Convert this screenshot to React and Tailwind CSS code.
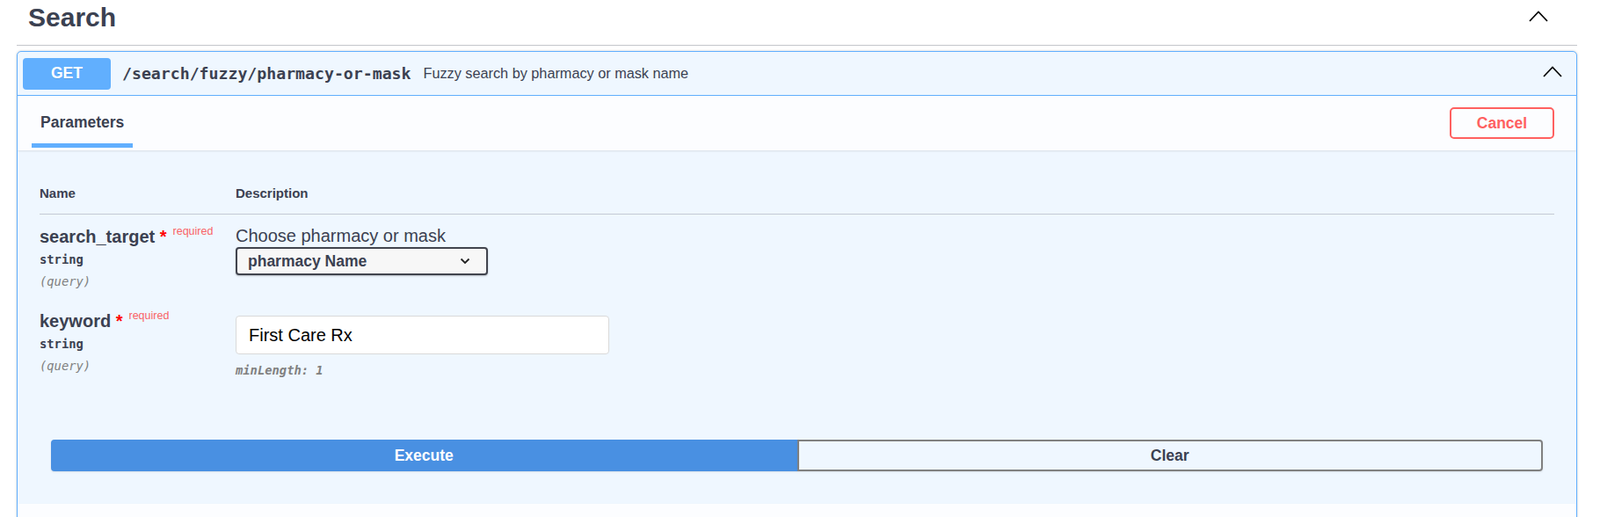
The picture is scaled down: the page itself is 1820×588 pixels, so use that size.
import React from "react";

const Chevron = ({ className }) => (
  <svg width="22" height="13" viewBox="0 0 22 13" className={className}>
    <polyline points="1,12 11,1.5 21,12" fill="none" stroke="#000" strokeWidth="1.7" />
  </svg>
);

const ParamRow = ({ name, children }) => (
  <div className="flex pt-[13px] h-[96px]">
    <div className="w-[223px] shrink-0">
      <div className="text-[20px] leading-[23px] font-bold text-[#3b4151] whitespace-nowrap">
        {name}
        <span className="text-[#ff0000]">&nbsp;*</span>
        <span className="text-[12.5px] leading-none font-normal text-[#f96366] pl-[7px] align-[9px]">
          required
        </span>
      </div>
      <div className="mt-[6px] font-['DejaVu_Sans_Mono',monospace] text-[13.8px] leading-[17px] font-bold text-[#3b4151]">
        string
      </div>
      <div className="mt-[8px] font-['DejaVu_Sans_Mono',monospace] text-[13.8px] leading-[17px] italic text-[#808080]">
        (query)
      </div>
    </div>
    <div className="flex-1">{children}</div>
  </div>
);

const App = () => {
  return (
    <div className="min-h-screen bg-white pl-[19px] pr-[26px] font-['Liberation_Sans',Arial,sans-serif] text-[#3b4151]">
      {/* Tag heading */}
      <div className="flex items-start justify-between h-[52px] border-b border-[#c4c6cb] pl-[13px]">
        <span className="mt-[2px] text-[30px] leading-[35px] font-bold">Search</span>
        <Chevron className="mt-[12px] mr-[33px]" />
      </div>

      {/* Operation block */}
      <div className="mt-[6px] border border-[#61affe] rounded-[5px] bg-[#eff7ff] shadow-[0_0_3px_rgba(0,0,0,0.19)] overflow-hidden">
        {/* Summary */}
        <div className="flex items-center h-[50px] pl-[6px] border-b border-[#61affe]">
          <div className="w-[100px] h-[36px] flex items-center justify-center rounded-[4px] bg-[#61affe] text-white text-[17.5px] font-bold [text-shadow:0_1px_0_rgba(0,0,0,0.1)]">
            GET
          </div>
          <span className="ml-[13px] font-['DejaVu_Sans_Mono',monospace] text-[18.2px] font-bold text-[#3b4151]">
            /search/fuzzy/pharmacy-or-mask
          </span>
          <span className="ml-[14px] text-[16.25px] text-[#3b4151]">Fuzzy search by pharmacy or mask name</span>
          <Chevron className="ml-auto mr-[16px] mb-[5px]" />
        </div>

        {/* Section header */}
        <div className="flex items-center justify-between h-[62px] bg-[#fcfdff] shadow-[0_1px_2px_rgba(0,0,0,0.1)] pr-[25px]">
          <div className="self-end mb-[3px] ml-[16px] px-[10px] pb-[14px] border-b-[5px] border-[#61affe] text-[17.5px] leading-[20px] font-bold text-[#3b4151]">
            Parameters
          </div>
          <button className="h-[36px] w-[119px] border-2 border-[#ff6060] rounded-[5px] text-[#ff6060] text-[17.5px] font-bold bg-transparent">
            Cancel
          </button>
        </div>

        {/* Parameters table */}
        <div className="px-[25px] pt-[25px] pb-[25px]">
          <div className="flex pt-[15px] pb-[15px] border-b border-[#c4cad4] text-[15px] leading-[17px] font-bold text-[#3b4151]">
            <div className="w-[223px] shrink-0">Name</div>
            <div>Description</div>
          </div>

          <ParamRow name="search_target">
            <div className="text-[20px] leading-[23px] text-[#3b4151]">Choose pharmacy or mask</div>
            <div className="mt-[1px] w-[287px] h-[32px] flex items-center justify-between pl-[12px] pr-[18px] border-2 border-[#41444e] rounded-[4px] bg-[#f7f7f7] shadow-[0_1px_2px_rgba(0,0,0,0.25)]">
              <span className="text-[17.5px] font-bold text-[#3b4151]">pharmacy Name</span>
              <svg width="12" height="8" viewBox="0 0 12 8">
                <polyline points="1.5,1.5 6,6 10.5,1.5" fill="none" stroke="#222" strokeWidth="1.8" />
              </svg>
            </div>
          </ParamRow>

          <ParamRow name="keyword">
            <input
              readOnly
              defaultValue="First Care Rx"
              className="mt-[6px] block w-[425px] h-[44px] pl-[14px] border border-[#d9d9d9] rounded-[4px] bg-white text-[20px] text-black outline-none font-['Liberation_Sans',Arial,sans-serif]"
            />
            <div className="mt-[11px] font-['DejaVu_Sans_Mono',monospace] text-[13.8px] leading-[14px] italic font-bold text-[#808080]">
              minLength: 1
            </div>
          </ParamRow>
        </div>

        {/* Execute / Clear */}
        <div className="flex px-[38px] pt-[39px] pb-[37px]">
          <button className="flex-1 h-[36px] bg-[#4990e2] border-2 border-[#4990e2] rounded-l-[4px] text-white text-[17.5px] font-bold shadow-[0_1px_2px_rgba(0,0,0,0.1)]">
            Execute
          </button>
          <button className="flex-1 h-[36px] bg-transparent border-2 border-[#808080] rounded-r-[4px] text-[#3b4151] text-[17.5px] font-bold shadow-[0_1px_2px_rgba(0,0,0,0.1)]">
            Clear
          </button>
        </div>

        {/* Responses header */}
        <div className="h-[62px] bg-[#fcfdff] shadow-[0_1px_2px_rgba(0,0,0,0.1)]" />
      </div>
    </div>
  );
};

export default App;
